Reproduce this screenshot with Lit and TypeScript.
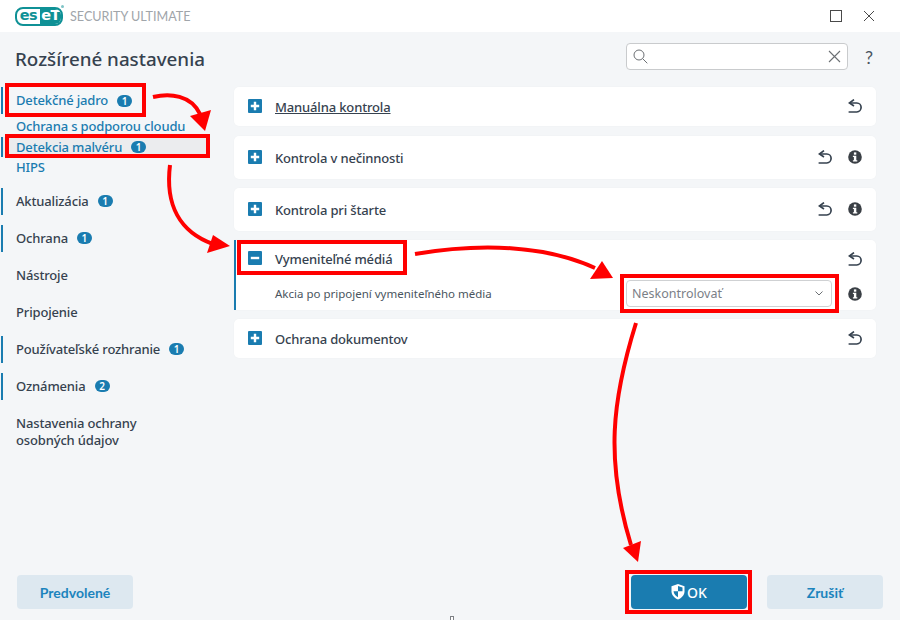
import { LitElement, html, css, svg } from "lit";
import { customElement } from "lit/decorators.js";

const undo = html`<svg class="ic" width="14" height="14" viewBox="0 0 14 14" fill="none"><path d="M6 .6 1.400 4l4.600 3" stroke="#36424f" stroke-width="1.700"/><path d="M2 4h6.800c2.500 0 4.300 1.900 4.300 4.300s-1.800 4.700-4.300 4.700H.6" stroke="#36424f" stroke-width="1.700"/></svg>`;
const info = html`<svg class="ic" width="14" height="14" viewBox="0 0 14 14"><circle cx="7" cy="7" r="6.800" fill="#3a3f45"/><rect x="5.900" y="2.400" width="2.400" height="2.300" fill="#fff"/><path d="M4.900 5.700h3.400v4.500h1v1.400H4.900v-1.400h1V7.100h-1z" fill="#fff"/></svg>`;
const plus = html`<svg class="ic" width="14" height="14" viewBox="0 0 14 14"><rect width="14" height="14" rx="1" fill="#1a7cb0"/><path d="M7 2.800v8.400M2.800 7h8.400" stroke="#fff" stroke-width="2.400"/></svg>`;
const minus = html`<svg class="ic" width="14" height="14" viewBox="0 0 14 14"><rect width="14" height="14" rx="1" fill="#1a7cb0"/><path d="M2.800 7h8.400" stroke="#fff" stroke-width="2.400"/></svg>`;

const arrows = svg`
  <path d="M153 97C170 93 191 95 200 114" />
  <polygon points="211,110 205,131 190,116" />
  <path d="M170 165C165 205 180 232 213 244" />
  <polygon points="213,235 230,246 207,253" />
  <path d="M415 254C480 243 545 245 595 268" />
  <polygon points="602,261 613,278 590,279" />
  <path d="M636 323C612 400 605 460 631 545" />
  <polygon points="623,548 641,541 638,562" />
`;

@customElement("app-root")
export class AppRoot extends LitElement {
  static styles = css`
    :host { display: flex; flex-direction: column; position: relative; width: 900px; height: 620px; overflow: hidden; background: #f4f6f8; font-family: "Noto Sans", "Open Sans", sans-serif; color: #36424f; font-size: 13px; font-weight: 500; letter-spacing: -0.150px; }
    * { box-sizing: border-box; }
    .ic { display: block; flex: none; }
    .titlebar { height: 32px; flex: none; background: #fff; display: flex; align-items: center; padding: 0 26px 0 15px; }
    .logo { position: relative; width: 48px; height: 19px; }
    .pill { width: 100%; height: 100%; border: 2px solid #0f9196; border-radius: 8px; display: flex; overflow: hidden; font-family: "DejaVu Sans", sans-serif; font-weight: 700; font-size: 14.500px; line-height: 13px; background: #fff; color: #0f9196; letter-spacing: -0.500px; }
    .pill .l { width: 23px; text-align: center; }
    .pill .r { flex: 1; background: #0f9196; color: #fff; text-align: center; }
    .reg { position: absolute; right: -1px; top: -2px; width: 3px; height: 3px; border-radius: 50%; background: #7fc4c6; }
    .product { margin-left: 7px; font-family: "Lato", sans-serif; font-size: 12.600px; font-weight: 400; letter-spacing: 0; color: #a0a5aa; flex: 1; }
    .win { display: flex; gap: 22px; align-items: center; }
    .header { height: 55px; flex: none; display: flex; align-items: center; padding: 0 23px 0 15px; }
    h1 { flex: 1; margin: 0 0 2px; font-size: 18.800px; font-weight: 500; letter-spacing: 0; color: #36424f; }
    .search { width: 222px; height: 27px; margin-bottom: 6px; background: #fff; border: 1px solid #c9cbcd; border-radius: 4px; display: flex; align-items: center; justify-content: space-between; padding: 0 6px; }
    .help { width: 18px; margin-left: 12px; margin-right: -1px; margin-bottom: 5px; text-align: center; font-family: "Lato", sans-serif; font-size: 18px; font-weight: 400; color: #4a5560; }
    .main { flex: 1; display: grid; grid-template-columns: 234px 1fr; padding-right: 24px; min-height: 0; }
    nav { display: flex; flex-direction: column; gap: 10px; padding-left: 1px; }
    .item { display: flex; align-items: center; min-height: 27px; padding: 5px 0 5px 13px; line-height: 17px; border-left: 2px solid transparent; }
    .item.mark { border-left-color: #1a7cb0; }
    .item .txt { max-width: 150px; }
    .group { display: flex; flex-direction: column; }
    .group .item { color: #1a7cb0; }
    .sub { display: flex; align-items: center; height: 20.500px; padding-left: 15px; color: #1a7cb0; }
    .subs { display: flex; flex-direction: column; margin-top: 2px; }
    .sub.sel { background: #ebecee; width: 205px; border-left: 2px solid #1a7cb0; padding-left: 13px; }
    .badge { width: 15px; height: 12px; margin-left: 9px; border-radius: 6px; background: #1a7cb0; color: #fff; font-size: 10px; line-height: 12px; text-align: center; font-weight: 600; letter-spacing: 0; }
    .cards { display: flex; flex-direction: column; gap: 9px; }
    .card { background: #fff; border-radius: 5px; min-height: 43px; padding-left: 14px; padding-right: 14px; box-shadow: 0 0 2px rgba(0,0,0,.03); }
    .card.short { min-height: 39px; margin-bottom: 1px; }
    .row { display: flex; align-items: center; gap: 13px; height: 43px; }
    .card.short .row { height: 39px; }
    .row > .ic { margin-top: -2px; }
    .title { flex: 1; color: #36424f; }
    .title.u { text-decoration: underline; }
    .acts { display: flex; gap: 16px; align-items: center; margin-top: -2px; }
    .card.open { height: 70px; border-left: 2px solid #1a7cb0; border-radius: 0 5px 5px 0; padding-left: 12px; }
    .card.open .row { height: 38px; }
    .card.open .acts { margin-top: 0; }
    .sub-row { display: flex; align-items: center; height: 31px; padding-left: 27px; font-size: 11.500px; }
    .label { flex: 1; color: #4a5560; font-weight: 400; letter-spacing: 0; }
    .select { width: 206px; height: 27px; border: 1px solid #cfd1d3; border-radius: 4px; display: flex; align-items: center; justify-content: space-between; padding: 0 8px 0 5px; color: #7b8087; font-size: 12.500px; font-weight: 400; letter-spacing: 0; margin-right: 16px; }
    .footer { flex: none; display: flex; gap: 20px; padding: 0 17px 11px; }
    button { width: 116px; height: 34px; border: none; border-radius: 4px; font-family: "Lato", sans-serif; font-weight: 700; font-size: 14px; display: flex; align-items: center; justify-content: center; gap: 2px; background: #dde8f0; color: #1c84bd; padding: 0; }
    button.ok { background: #1a7cb0; color: #fff; font-family: "Noto Sans", sans-serif; font-size: 14px; font-weight: 500; }
    .grow { flex: 1; }
    .overlay { position: absolute; inset: 0; pointer-events: none; }
    .box { position: absolute; border: 4px solid #ff0000; }
    .b1 { left: 5px; top: 83px; width: 141px; height: 34px; }
    .b2 { left: 5px; top: 134px; width: 205px; height: 24px; }
    .b3 { left: 237px; top: 240px; width: 170px; height: 35px; }
    .b4 { left: 620px; top: 274px; width: 219px; height: 39px; }
    .b5 { left: 625px; top: 570px; width: 127px; height: 44px; }
    svg.arrows { position: absolute; inset: 0; }
    svg.arrows path { fill: none; stroke: #ff0000; stroke-width: 4; }
    svg.arrows polygon { fill: #ff0000; }
    .tick { position: absolute; left: 450px; top: 616px; width: 4px; height: 5px; border: 1px solid #7d8085; background: #fff; }
  `;

  private navItem(label: string, badge?: string, mark = false) {
    return html`<div class="item ${mark ? "mark" : ""}"><span class=${badge ? "" : "txt"}>${label}</span>${badge ? html`<span class="badge">${badge}</span>` : ""}</div>`;
  }

  private card(title: string, withInfo: boolean, short = false, under = false) {
    return html`<section class="card ${short ? "short" : ""}">
      <div class="row">${plus}<span class="title ${under ? "u" : ""}">${title}</span>
        <div class="acts">${undo}${withInfo ? info : ""}</div></div>
    </section>`;
  }

  render() {
    return html`
      <div class="titlebar">
        <div class="logo"><div class="pill"><span class="l">es</span><span class="r">eT</span></div><span class="reg"></span></div>
        <span class="product">SECURITY ULTIMATE</span>
        <div class="win">
          <svg class="ic" width="12" height="12" viewBox="0 0 12 12"><rect x=".5" y=".5" width="11" height="11" fill="none" stroke="#4a4a4a"/></svg>
          <svg class="ic" width="10" height="10" viewBox="0 0 10 10"><path d="M0 0l10 10M10 0L0 10" stroke="#4a4a4a" fill="none"/></svg>
        </div>
      </div>
      <div class="header">
        <h1>Rozšírené nastavenia</h1>
        <div class="search">
          <svg class="ic" width="15" height="15" viewBox="0 0 15 15" fill="none"><circle cx="6" cy="6" r="5" stroke="#6b6f73"/><path d="M9.700 9.700l4.600 4.600" stroke="#6b6f73"/></svg>
          <svg class="ic" width="13" height="13" viewBox="0 0 13 13" fill="none"><path d="M1 1l11 11M12 1L1 12" stroke="#6b6f73" stroke-width="1.100"/></svg>
        </div>
        <span class="help">?</span>
      </div>
      <div class="main">
        <nav>
          <div class="group">
            ${this.navItem("Detekčné jadro", "1", true)}
            <div class="subs">
              <div class="sub">Ochrana s podporou cloudu</div>
              <div class="sub sel">Detekcia malvéru<span class="badge">1</span></div>
              <div class="sub">HIPS</div>
            </div>
          </div>
          ${this.navItem("Aktualizácia", "1", true)}
          ${this.navItem("Ochrana", "1", true)}
          ${this.navItem("Nástroje")}
          ${this.navItem("Pripojenie")}
          ${this.navItem("Používateľské rozhranie", "1", true)}
          ${this.navItem("Oznámenia", "2", true)}
          ${this.navItem("Nastavenia ochrany osobných údajov")}
        </nav>
        <div class="cards">
          ${this.card("Manuálna kontrola", false, true, true)}
          ${this.card("Kontrola v nečinnosti", true)}
          ${this.card("Kontrola pri štarte", true)}
          <section class="card open">
            <div class="row">${minus}<span class="title">Vymeniteľné médiá</span><div class="acts">${undo}</div></div>
            <div class="sub-row">
              <span class="label">Akcia po pripojení vymeniteľného média</span>
              <div class="select"><span>Neskontrolovať</span>
                <svg class="ic" width="8" height="5" viewBox="0 0 8 5" fill="none"><path d="M.5.5l3.500 3.500L7.500.5" stroke="#6b6f73"/></svg>
              </div>
              ${info}
            </div>
          </section>
          ${this.card("Ochrana dokumentov", false, true)}
        </div>
      </div>
      <div class="footer">
        <button>Predvolené</button>
        <div class="grow"></div>
        <button class="ok">
          <svg class="ic" width="14" height="16" viewBox="0 0 14 16"><path d="M7 0l6.500 2.200v5c0 3.900-3 6.900-6.500 8.300C3.500 14.100.5 11.100.5 7.200v-5z" fill="#fff"/><path d="M7 2l4.500 1.500v3.700H7zM7 7.200v6C5 12.100 2.800 10.100 2.500 7.200z" fill="#1a7cb0"/></svg>
          OK</button>
        <button>Zrušiť</button>
      </div>
      <div class="tick"></div>
      <div class="overlay">
        <div class="box b1"></div><div class="box b2"></div><div class="box b3"></div><div class="box b4"></div><div class="box b5"></div>
        <svg class="arrows" width="900" height="620" viewBox="0 0 900 620">${arrows}</svg>
      </div>
    `;
  }
}
